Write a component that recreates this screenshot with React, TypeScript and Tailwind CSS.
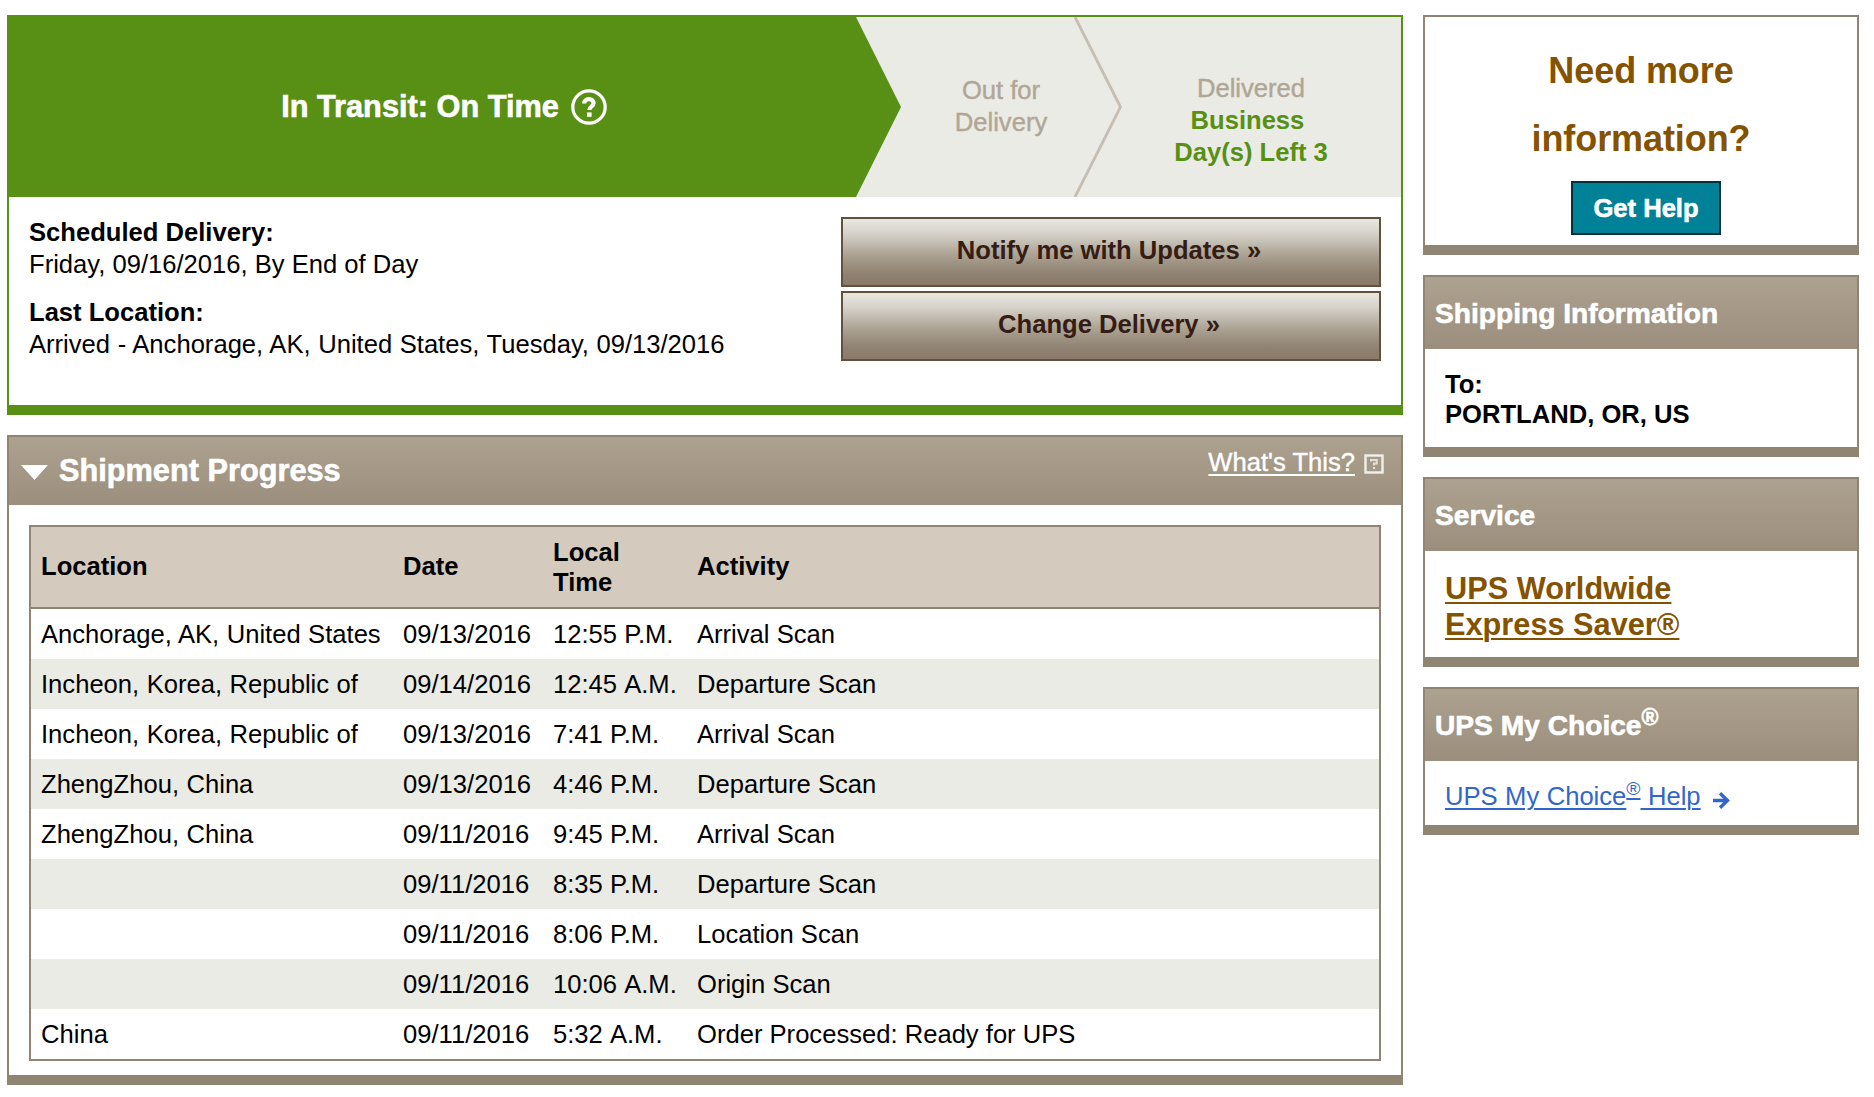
import React from 'react';

interface ScanRow {
  location: string;
  date: string;
  time: string;
  activity: string;
}

const scans: ScanRow[] = [
  { location: 'Anchorage, AK, United States', date: '09/13/2016', time: '12:55 P.M.', activity: 'Arrival Scan' },
  { location: 'Incheon, Korea, Republic of', date: '09/14/2016', time: '12:45 A.M.', activity: 'Departure Scan' },
  { location: 'Incheon, Korea, Republic of', date: '09/13/2016', time: '7:41 P.M.', activity: 'Arrival Scan' },
  { location: 'ZhengZhou, China', date: '09/13/2016', time: '4:46 P.M.', activity: 'Departure Scan' },
  { location: 'ZhengZhou, China', date: '09/11/2016', time: '9:45 P.M.', activity: 'Arrival Scan' },
  { location: '', date: '09/11/2016', time: '8:35 P.M.', activity: 'Departure Scan' },
  { location: '', date: '09/11/2016', time: '8:06 P.M.', activity: 'Location Scan' },
  { location: '', date: '09/11/2016', time: '10:06 A.M.', activity: 'Origin Scan' },
  { location: 'China', date: '09/11/2016', time: '5:32 A.M.', activity: 'Order Processed: Ready for UPS' },
];

const HelpCircle: React.FC = () => (
  <svg className="ml-[12px] h-9 w-9" viewBox="0 0 36 36" fill="none">
    <circle cx="18" cy="18" r="16.2" stroke="#fff" strokeWidth="3.2" />
    <path d="M13.2 14.6c0-2.8 2-4.4 4.8-4.4s4.6 1.5 4.6 3.9c0 3.4-4.2 3.2-4.2 7" stroke="#fff" strokeWidth="4.2" />
    <rect x="16" y="23.4" width="4.6" height="4.4" fill="#fff" />
  </svg>
);

const HelpSquare: React.FC = () => (
  <svg className="mt-[17px] ml-[9px] h-5 w-5" viewBox="0 0 20 20" fill="none">
    <rect x="1.5" y="1.5" width="17" height="17" stroke="#f1efec" strokeWidth="2.4" />
    <path d="M7 7.4V6h5.8v3.4H10V11.4" stroke="#e3dfda" strokeWidth="2" />
    <rect x="8.9" y="13" width="2.2" height="2" fill="#e3dfda" />
  </svg>
);

const StatusBar: React.FC = () => (
  <div className="relative flex h-[180px] bg-[#eaebe4]">
    <svg className="absolute inset-0 h-[180px] w-[1392px]" viewBox="0 0 1392 180" fill="none">
      <path d="M0 0h847l45 90-45 90H0z" fill="#589016" />
      <path d="M1066 0l45.5 90-45.5 90" stroke="#c6beb2" strokeWidth="2.8" />
    </svg>
    <div className="relative flex w-[870px] items-center justify-center text-[30.72px] font-bold text-white [-webkit-text-stroke:0.6px_white]">
      <span>In Transit: On Time</span>
      <HelpCircle />
    </div>
    <div className="relative ml-[2px] w-[240px] pt-[57px] text-center leading-8 text-[#b0a696] [-webkit-text-stroke:0.4px_#b0a696]">
      Out for
      <br />
      Delivery
    </div>
    <div className="relative ml-[30px] w-[200px] pt-[55px] text-center leading-8 text-[#b0a696] [-webkit-text-stroke:0.4px_#b0a696]">
      Delivered
      <div className="font-bold text-[#589016] [-webkit-text-stroke:0px]">
        Business&nbsp;
        <br />
        Day(s) Left 3
      </div>
    </div>
  </div>
);

const ActionButton: React.FC<{ label: string }> = ({ label }) => (
  <button className="flex h-[70px] w-[540px] justify-center border-2 border-[#62523b] bg-[linear-gradient(to_bottom,#e8e8e1_0%,#d5d2c9_22%,#b1a89a_50%,#9f9484_66%,#8f8171_84%,#8a7a6b_100%)] pt-[14px] pr-1 leading-[34px] font-bold text-[#351c15]">
    {label}
  </button>
);

const SidePanel: React.FC<{ title: React.ReactNode; children: React.ReactNode }> = ({ title, children }) => (
  <section className="border-2 border-b-[10px] border-[#908473]">
    <h3 className="h-[72px] bg-linear-to-b from-[#ada190] to-[#9b8e7d] pl-[10px] text-[28.16px] leading-[73px] font-bold text-white [-webkit-text-stroke:0.6px_white]">
      {title}
    </h3>
    {children}
  </section>
);

export default function App() {
  return (
    <div className="flex h-[1097px] items-start gap-5 overflow-hidden bg-white pt-[15px] pl-[7px] font-['Liberation_Sans',Arial,sans-serif] text-[25.6px] text-black">
      <main className="w-[1396px]">
        <section className="h-[400px] border-2 border-b-[10px] border-[#589016]">
          <StatusBar />
          <div className="flex justify-between pr-5 pl-5">
            <div className="pt-[19px] leading-8">
              <p className="font-bold">Scheduled Delivery:</p>
              <p>Friday, 09/16/2016, By End of Day</p>
              <p className="mt-4 font-bold">Last Location:</p>
              <p className="[word-spacing:0.45px]">Arrived - Anchorage, AK, United States, Tuesday, 09/13/2016</p>
            </div>
            <div className="flex flex-col gap-1 pt-5">
              <ActionButton label="Notify me with Updates »" />
              <ActionButton label="Change Delivery »" />
            </div>
          </div>
        </section>

        <section className="mt-5 h-[650px] border-2 border-b-[10px] border-[#908473]">
          <div className="flex h-[68px] bg-linear-to-b from-[#ada190] to-[#9b8e7d] pl-3 text-white">
            <svg className="mt-7 h-[15px] w-[27px]" viewBox="0 0 27 15">
              <path d="M0 0h27L13.5 15z" fill="#fff" />
            </svg>
            <h2 className="ml-[11px] text-[30.72px] leading-[68px] font-bold [-webkit-text-stroke:0.6px_white]">
              Shipment Progress
            </h2>
            <a className="mt-[9px] ml-auto h-[32px] leading-8 underline decoration-2 underline-offset-[3px] [-webkit-text-stroke:0.4px_white]">
              What's This?
            </a>
            <div className="mr-[17px]">
              <HelpSquare />
            </div>
          </div>
          <div className="px-5 pt-5">
            <table className="w-full table-fixed border-separate border-spacing-0 border-2 border-[#908473] text-left">
              <thead className="bg-[#d4cbbe]">
                <tr className="h-[82px] leading-[30px]">
                  <th className="w-[362px] border-b-2 border-[#908473] pb-[2px] pl-[10px]">Location</th>
                  <th className="w-[150px] border-b-2 border-[#908473] pb-[2px] pl-[10px]">Date</th>
                  <th className="w-[144px] border-b-2 border-[#908473] pl-[10px]">
                    Local
                    <br />
                    Time
                  </th>
                  <th className="border-b-2 border-[#908473] pb-[2px] pl-[10px]">Activity</th>
                </tr>
              </thead>
              <tbody>
                {scans.map((scan, i) => (
                  <tr key={i} className="h-[50px] leading-[50px] whitespace-nowrap even:bg-[#eaebe4]">
                    <td className="pl-[10px] [word-spacing:0.35px]">{scan.location}</td>
                    <td className="pl-[10px]">{scan.date}</td>
                    <td className={`pl-[10px] ${scan.time.endsWith('A.M.') ? '[word-spacing:1.4px]' : ''}`}>{scan.time}</td>
                    <td className="pl-[10px]">{scan.activity}</td>
                  </tr>
                ))}
              </tbody>
            </table>
          </div>
        </section>
      </main>

      <aside className="flex w-[436px] flex-col gap-5">
        <section className="flex h-[240px] flex-col items-center border-2 border-b-[10px] border-[#908473] pt-5">
          <p className="text-center text-[36px] leading-[68px] font-bold tracking-[-0.09px] text-[#855300]">
            Need more
            <br />
            information?
          </p>
          <button className="mt-2 ml-[10px] h-[54px] w-[150px] border-2 border-[#04303a] bg-[#008198] font-bold text-white [-webkit-text-stroke:0.6px_white]">
            Get Help
          </button>
        </section>

        <SidePanel title="Shipping Information">
          <div className="h-[98px] pt-5 pl-5 leading-[30px] font-bold">
            To:
            <br />
            PORTLAND, OR, US
          </div>
        </SidePanel>

        <SidePanel title="Service">
          <div className="h-[106px] pt-5 pl-5 text-[30.72px] leading-9 font-bold text-[#855300]">
            <a className="underline decoration-2 underline-offset-[3px]">
              UPS Worldwide
              <br />
              Express Saver®
            </a>
          </div>
        </SidePanel>

        <SidePanel
          title={
            <>
              UPS My Choice<sup className="top-[-0.45em] text-[23px]">®</sup>
            </>
          }
        >
          <div className="flex h-[64px] pl-5 leading-[70px] text-[#3366cc]">
            <a className="whitespace-pre [word-spacing:0.35px]">
              <span className="underline decoration-2 underline-offset-[3px]">UPS My Choice</span>
              <sup className="text-[19.2px] underline decoration-2 underline-offset-[3px]">®</sup>
              <span className="underline decoration-2 underline-offset-[3px]"> Help</span>
            </a>
            <svg className="mt-[31px] ml-3 h-[17px] w-[17px]" viewBox="0 0 17 17" fill="none">
              <path d="M0 8.5h14M7 1.2l7.5 7.3L7 15.8" stroke="#3366cc" strokeWidth="3.4" />
            </svg>
          </div>
        </SidePanel>
      </aside>
    </div>
  );
}
